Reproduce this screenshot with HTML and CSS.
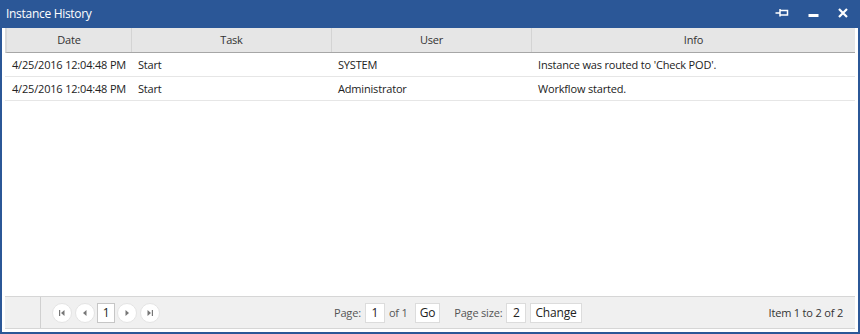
FILE: index.html
```html
<!DOCTYPE html>
<html>
<head>
	<meta charset="UTF-8">
	<title>Instance History</title>
	<link rel="stylesheet" href="styles.css">
</head>
<body>
	<div class="window">
		<div class="titlebar">
			<span class="title">Instance History</span>
			<div class="tools">
				<svg class="tool" width="14" height="10" viewBox="0 0 14 10">
					<path d="M5 2.5h7.5v4.5H5z M5 1v7.5 M0.5 5H5" fill="none" stroke="#fff" stroke-width="1.5"/>
				</svg>
				<svg class="tool" width="11" height="10" viewBox="0 0 11 10">
					<rect x="0.5" y="6" width="10" height="3" fill="#fff"/>
				</svg>
				<svg class="tool" width="10" height="10" viewBox="0 0 10 10">
					<path d="M1 1L9 9M9 1L1 9" stroke="#fff" stroke-width="2.2"/>
				</svg>
			</div>
		</div>
		<div class="content">
			<div class="grid">
				<div class="grid-head">
					<div class="cell c-date">Date</div>
					<div class="cell c-task">Task</div>
					<div class="cell c-user">User</div>
					<div class="cell c-info">Info</div>
				</div>
				<div class="grid-body">
					<div class="row">
						<div class="cell c-date">4/25/2016 12:04:48 PM</div>
						<div class="cell c-task">Start</div>
						<div class="cell c-user">SYSTEM</div>
						<div class="cell c-info">Instance was routed to 'Check POD'.</div>
					</div>
					<div class="row">
						<div class="cell c-date">4/25/2016 12:04:48 PM</div>
						<div class="cell c-task">Start</div>
						<div class="cell c-user">Administrator</div>
						<div class="cell c-info">Workflow started.</div>
					</div>
				</div>
				<div class="pager">
					<div class="pager-left"></div>
					<div class="nav">
						<span class="nav-btn"><svg width="8" height="8" viewBox="0 0 8 8"><rect x="1" y="1" width="1.2" height="6" fill="#777"/><path d="M6.5 1v6L3 4z" fill="#777"/></svg></span>
						<span class="nav-btn"><svg width="8" height="8" viewBox="0 0 8 8"><path d="M5.5 1v6L2 4z" fill="#777"/></svg></span>
						<span class="page-num">1</span>
						<span class="nav-btn"><svg width="8" height="8" viewBox="0 0 8 8"><path d="M2.5 1v6L6 4z" fill="#777"/></svg></span>
						<span class="nav-btn"><svg width="8" height="8" viewBox="0 0 8 8"><path d="M1.5 1v6L5 4z" fill="#777"/><rect x="5.8" y="1" width="1.2" height="6" fill="#777"/></svg></span>
					</div>
					<div class="pager-mid">
						<span class="lbl">Page:</span>
						<span class="box">1</span>
						<span class="lbl">of 1</span>
						<span class="box btn go">Go</span>
						<span class="lbl gap">Page size:</span>
						<span class="box">2</span>
						<span class="box btn">Change</span>
					</div>
					<div class="pager-info">Item 1 to 2 of 2</div>
				</div>
			</div>
		</div>
	</div>
</body>
</html>
```

FILE: styles.css
```css
body {
	margin: 0;
	font-family: "Open Sans", "Noto Sans", sans-serif;
	font-size: 11px;
	letter-spacing: -0.18px;
	color: #222;
}

.window {
	width: 860px;
	height: 334px;
	box-sizing: border-box;
	background-color: #2b5797;
	padding: 0 2px 2px 2px;
	display: flex;
	flex-direction: column;
}

.titlebar {
	height: 28px;
	display: flex;
	align-items: center;
	justify-content: space-between;
	color: #fff;
}

.title {
	font-size: 12px;
	letter-spacing: -0.3px;
	padding-left: 4px;
	margin-top: -2px;
}

.tools {
	display: flex;
	align-items: center;
	margin-right: 10px;
	margin-top: -2px;
}

.tool {
	display: block;
	margin-left: 19px;
}

.content {
	flex: 1;
	background-color: #fff;
	padding: 0 3px 3px 3px;
	display: flex;
}

.grid {
	flex: 1;
	display: flex;
	flex-direction: column;
}

.grid-head {
	display: flex;
	height: 24px;
	background-color: #e6e6e6;
	border-bottom: 1px solid #a6a6a6;
	border-left: 2px solid #d8d8d8;
}

.grid-head .cell {
	text-align: center;
	line-height: 24px;
	border-right: 1px solid #d4d4d4;
	color: #333;
}

.grid-head .cell:last-child {
	border-right: none;
}

.cell {
	box-sizing: border-box;
	white-space: nowrap;
}

.c-date { width: 125px; }
.c-task { width: 200px; }
.c-user { width: 200px; }
.c-info { flex: 1; }

.grid-body {
	flex: 1;
}

.row {
	display: flex;
	height: 23px;
	border-bottom: 1px solid #e6e6e6;
	align-items: center;
}

.row .cell {
	padding-left: 6px;
}

.row .c-date {
	width: 127px;
	padding-left: 7px;
}

.pager {
	height: 33px;
	box-sizing: border-box;
	background-color: #f0f0f0;
	border-top: 1px solid #d6d6d6;
	border-bottom: 1px solid #d6d6d6;
	display: flex;
	align-items: center;
}

.pager-left {
	width: 35px;
	height: 100%;
	border-right: 1px solid #d0d0d0;
}

.nav {
	display: flex;
	align-items: center;
	margin-left: 11px;
	gap: 3px;
}

.nav-btn {
	width: 20px;
	height: 20px;
	border-radius: 50%;
	background-color: #fff;
	border: 1px solid #e4e4e4;
	box-sizing: border-box;
	display: flex;
	align-items: center;
	justify-content: center;
}

.page-num {
	width: 18px;
	height: 20px;
	box-sizing: border-box;
	background-color: #fff;
	border: 1px solid #c6c6c6;
	text-align: center;
	line-height: 18px;
	font-size: 12px;
	margin: 0 -1px;
}

.pager-mid {
	display: flex;
	align-items: center;
	margin-left: 174px;
	gap: 4px;
}

.lbl {
	color: #555;
}

.lbl.gap {
	margin-left: 10px;
}

.box {
	height: 20px;
	min-width: 20px;
	box-sizing: border-box;
	background-color: #fff;
	border: 1px solid #dcdcdc;
	text-align: center;
	line-height: 18px;
	font-size: 12px;
	padding: 0 2px;
}

.box.btn {
	padding: 0 4px;
}

.box.go {
	margin-left: 3px;
}

.pager-info {
	margin-left: auto;
	margin-right: 12px;
	color: #333;
}
```
